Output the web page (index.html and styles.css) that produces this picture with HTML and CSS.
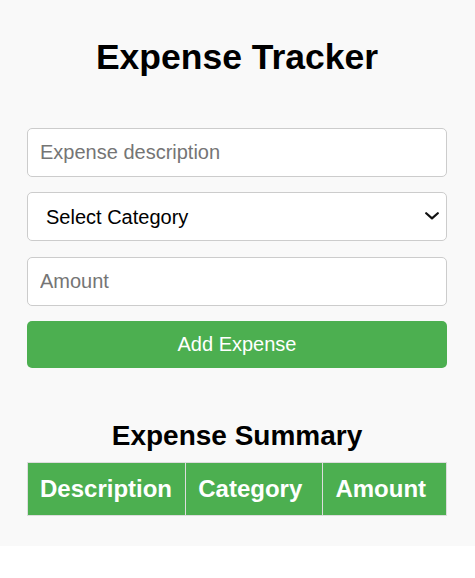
FILE: index.html
```html
<!DOCTYPE html>
<html lang="en">
<head>
<meta charset="utf-8">
<title>Expense Tracker</title>
<link rel="stylesheet" href="styles.css">
</head>
<body>
<div class="container">
  <h1 class="title">Expense Tracker</h1>
  <form class="form">
    <input class="field" type="text" placeholder="Expense description">
    <div class="select-wrap">
      <select class="field select">
        <option>Select Category</option>
        <option>Food</option>
        <option>Transport</option>
        <option>Entertainment</option>
      </select>
      <svg class="chevron" width="14" height="8" viewBox="0 0 14 8" aria-hidden="true">
        <path d="M1.2 1.2 L7 6.4 L12.8 1.2" fill="none" stroke="#111" stroke-width="2.2" stroke-linecap="round" stroke-linejoin="round"/>
      </svg>
    </div>
    <input class="field" type="number" placeholder="Amount">
    <button class="btn" type="button">Add Expense</button>
  </form>
  <h2 class="subtitle">Expense Summary</h2>
  <table class="summary">
    <thead>
      <tr>
        <th class="col-desc">Description</th>
        <th class="col-cat">Category</th>
        <th class="col-amt">Amount</th>
      </tr>
    </thead>
    <tbody></tbody>
  </table>
</div>
</body>
</html>
```

FILE: styles.css
```css
html, body {
  margin: 0;
  padding: 0;
  background: #ffffff;
  font-family: "Liberation Sans", Arial, sans-serif;
}

.container {
  background: #f9f9f9;
  padding: 37px 28px 30px 27px;
}

.title {
  margin: 0 0 50px 0;
  font-size: 35.5px;
  font-weight: bold;
  text-align: center;
  color: #000;
}

.form {
  display: flex;
  flex-direction: column;
  gap: 15.33px;
}

.field {
  box-sizing: border-box;
  height: 49px;
  width: 100%;
  margin: 0;
  padding: 12px;
  font-family: "Liberation Sans", Arial, sans-serif;
  font-size: 20px;
  border: 1px solid #cccccc;
  border-radius: 5px;
  background: #ffffff;
  color: #000;
  outline: none;
}

.field::placeholder {
  color: #757575;
}

.select-wrap {
  position: relative;
}

.select {
  display: block;
  appearance: none;
  -webkit-appearance: none;
  padding: 0 40px 0 18px;
}

.chevron {
  position: absolute;
  right: 8px;
  top: 20px;
  pointer-events: none;
}

.btn {
  box-sizing: border-box;
  height: 47px;
  width: 100%;
  margin: 0;
  padding: 12px;
  font-family: "Liberation Sans", Arial, sans-serif;
  font-size: 20px;
  color: #ffffff;
  background: #4caf50;
  border: none;
  border-radius: 5px;
}

.subtitle {
  margin: 52px 0 10px 0;
  font-size: 28px;
  font-weight: bold;
  text-align: center;
  color: #000;
}

.summary {
  width: 100%;
  border-collapse: collapse;
  table-layout: fixed;
}

.summary th {
  padding: 12px;
  text-align: left;
  font-size: 24px;
  font-weight: bold;
  color: #ffffff;
  background: #4caf50;
  border: 1px solid #dddddd;
  white-space: nowrap;
}

.col-desc { width: 38.57%; }
.col-cat { width: 32.62%; }
.col-amt { width: 28.81%; }
```
